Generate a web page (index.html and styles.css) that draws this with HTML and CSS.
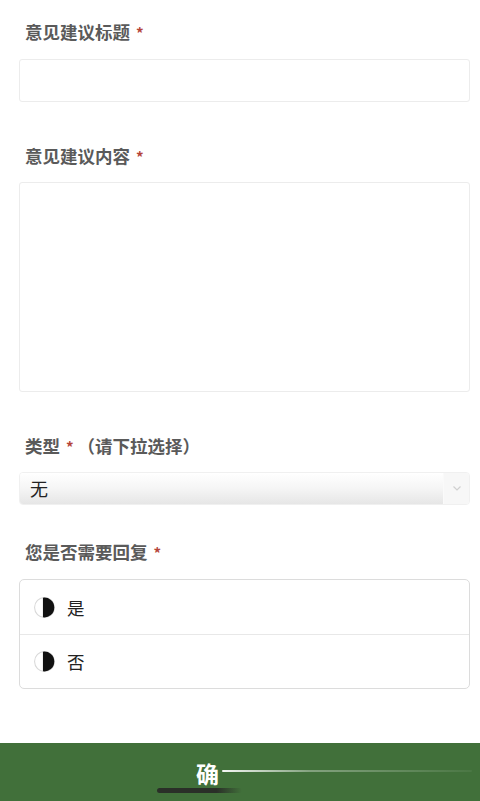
FILE: index.html
```html
<!DOCTYPE html>
<html lang="zh-CN">
<head>
<meta charset="utf-8">
<link rel="stylesheet" href="styles.css">
</head>
<body>
<form class="form">
  <div class="field field-title">
    <div class="label">意见建议标题 <span class="req">*</span></div>
    <div class="input"></div>
  </div>
  <div class="field field-content">
    <div class="label">意见建议内容 <span class="req">*</span></div>
    <div class="textarea"></div>
  </div>
  <div class="field field-type">
    <div class="label">类型 <span class="req">*</span> （请下拉选择）</div>
    <div class="select">
      <span class="select-value">无</span>
      <span class="select-arrow">
        <svg width="10" height="7" viewBox="0 0 10 7"><path d="M1.5 1.5 L5 5 L8.5 1.5" fill="none" stroke="#d0d0d0" stroke-width="1.2"/></svg>
      </span>
    </div>
  </div>
  <div class="field field-reply">
    <div class="label">您是否需要回复 <span class="req">*</span></div>
    <div class="radios">
      <div class="radio">
        <svg class="radio-icon" width="23" height="23" viewBox="0 0 22 22"><circle cx="11" cy="11" r="9.5" fill="#fff" stroke="#d8d8d8" stroke-width="1"/><path d="M9.5 1.6 A9.5 9.5 0 1 1 9.5 20.4 Z" fill="#111"/></svg>
        <span>是</span>
      </div>
      <div class="radio">
        <svg class="radio-icon" width="23" height="23" viewBox="0 0 22 22"><circle cx="11" cy="11" r="9.5" fill="#fff" stroke="#d8d8d8" stroke-width="1"/><path d="M9.5 1.6 A9.5 9.5 0 1 1 9.5 20.4 Z" fill="#111"/></svg>
        <span>否</span>
      </div>
    </div>
  </div>
</form>
<footer class="footer">
  <div class="submit">
    <span class="submit-text">确</span>
    <span class="streak"></span>
  </div>
  <span class="home-bar"></span>
</footer>
</body>
</html>
```

FILE: styles.css
```css
* { box-sizing: border-box; }
html, body { margin: 0; padding: 0; background: #fff; }
body {
  width: 480px;
  height: 801px;
  overflow: hidden;
  font-family: "Noto Sans CJK SC", "Noto Sans", sans-serif;
  display: flex;
  flex-direction: column;
}
.form {
  padding: 20px 10px 0 19px;
  display: flex;
  flex-direction: column;
}
.field { display: flex; flex-direction: column; }
.label {
  font-size: 17.5px;
  line-height: 24px;
  font-weight: 700;
  color: #5a5a5a;
  padding-left: 6px;
  margin-bottom: 14px;
}
.req { color: #b5453a; font-size: 15px; margin-left: 2px; }
.input {
  height: 43px;
  border: 1px solid #ececec;
  border-radius: 3px;
}
.textarea {
  height: 210px;
  border: 1px solid #ececec;
  border-radius: 3px;
}
.field-title { margin-bottom: 42px; }
.field-content { margin-bottom: 42px; }
.field-content .label { margin-bottom: 13px; }
.field-type { margin-bottom: 35px; }
.field-type .label { margin-bottom: 13px; }
.select {
  height: 33px;
  display: flex;
  border-radius: 4px;
  overflow: hidden;
  border: 1px solid #f0f0f0;
}
.select-value {
  flex: 1;
  font-size: 18px;
  line-height: 31px;
  padding-left: 10px;
  color: #222;
  background: linear-gradient(#ffffff, #f5f5f5 50%, #e6e6e6);
}
.select-arrow {
  width: 26px;
  display: flex;
  align-items: center;
  justify-content: center;
  background: #f7f7f7;
  border-left: 1px solid #fafafa;
}
.radios {
  border: 1px solid #dcdcdc;
  border-radius: 5px;
  display: flex;
  flex-direction: column;
}
.radio {
  height: 54px;
  display: flex;
  align-items: center;
  gap: 11px;
  padding-left: 13px;
  font-size: 17.5px;
  color: #222;
}
.radio + .radio { border-top: 1px solid #e8e8e8; }
.footer {
  margin-top: auto;
  height: 58px;
  background: #41703a;
  position: relative;
  display: flex;
  padding-left: 196px;
}
.submit {
  display: flex;
  align-items: center;
  padding-top: 2px;
  height: 58px;
}
.submit-text {
  color: #fff;
  font-size: 23px;
  font-weight: 700;
  line-height: 1;
}
.streak {
  position: absolute;
  left: 222px;
  top: 27px;
  width: 250px;
  height: 2px;
  border-radius: 2px;
  background: linear-gradient(90deg, rgba(255,255,255,0.95), rgba(255,255,255,0.35) 35%, rgba(255,255,255,0.05));
}
.home-bar {
  position: absolute;
  left: 157px;
  top: 45px;
  width: 85px;
  height: 5px;
  border-radius: 3px;
  background: linear-gradient(90deg, #2a2f28 70%, rgba(42,47,40,0));
}
```
